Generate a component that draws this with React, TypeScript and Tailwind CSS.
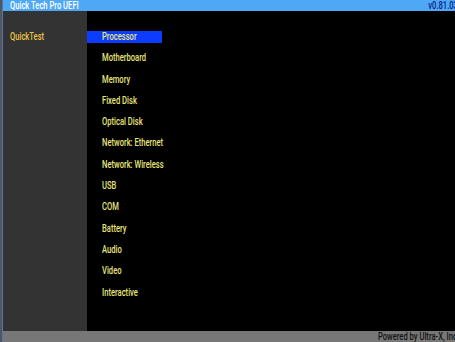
const items = [
  "Processor",
  "Motherboard",
  "Memory",
  "Fixed Disk",
  "Optical Disk",
  "Network: Ethernet",
  "Network: Wireless",
  "USB",
  "COM",
  "Battery",
  "Audio",
  "Video",
  "Interactive",
];

export default function App() {
  return (
    <div className="flex h-[342px] w-[455px] overflow-hidden bg-black font-['Roboto',sans-serif] text-[10px] font-medium leading-none">
      {/* left edge strip */}
      <div className="flex w-[3px] shrink-0">
        <div className="w-[2px] bg-[#4f5660]" />
        <div className="w-[1px] bg-[#5578a8]" />
      </div>

      <div className="flex min-w-0 flex-1 flex-col">
        {/* title bar */}
        <div className="flex h-[11px] shrink-0 items-center justify-between bg-[#4fa8f6] pl-[7px]">
          <span className="inline-block origin-left scale-x-[0.76] whitespace-nowrap text-white">Quick Tech Pro UEFI</span>
          <span className="-mr-[3px] inline-block origin-right scale-x-[0.76] whitespace-nowrap text-[#0a1c8a]">
            v0.81.03
          </span>
        </div>

        <div className="flex min-h-0 flex-1">
          {/* sidebar */}
          <div className="w-[84px] shrink-0 bg-[#333333] pl-[7px] pt-[21px]">
            <span className="inline-block origin-left scale-x-[0.76] whitespace-nowrap text-[#e9c445]">QuickTest</span>
          </div>

          {/* menu */}
          <div className="flex-1 pt-[20px]">
            {items.map((item, i) => (
              <div
                key={item}
                className={
                  i === 0
                    ? "flex h-[12px] w-[75px] items-center bg-[#0b3cff] pl-[15px] text-[#e8e67a]"
                    : "mt-[9.3px] flex h-[12px] items-center pl-[15px] text-[#e8e67a]"
                }
              >
                <span className="inline-block origin-left scale-x-[0.76] whitespace-nowrap">{item}</span>
              </div>
            ))}
          </div>
        </div>

        {/* footer */}
        <div className="flex h-[11px] shrink-0 items-center justify-end overflow-hidden bg-[#777777]">
          <span className="-mr-[2px] inline-block origin-right scale-x-[0.76] whitespace-nowrap text-[#111111]">
            Powered by Ultra-X, Inc
          </span>
        </div>
      </div>
    </div>
  );
}
